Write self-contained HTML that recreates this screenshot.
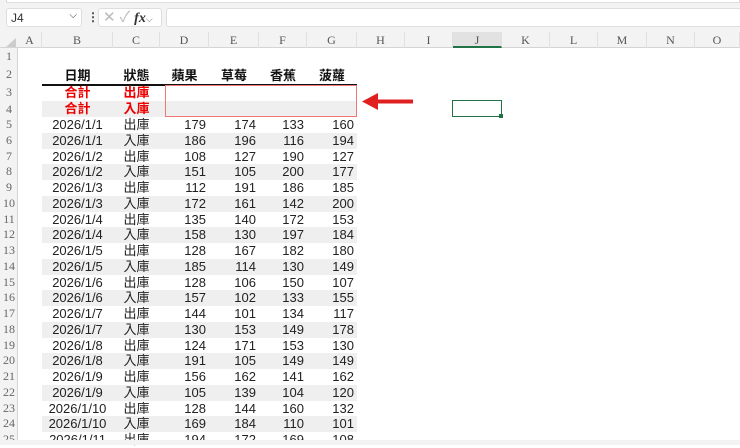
<!DOCTYPE html><html><head><meta charset="utf-8"><style>
*{margin:0;padding:0;box-sizing:border-box}
body{width:740px;height:445px;overflow:hidden;background:#fff;font-family:"Liberation Sans","Noto Sans CJK TC",sans-serif;position:relative}
.a{position:absolute}
.ch{position:absolute;top:32px;height:16px;font:12px "Liberation Serif",serif;color:#555;text-align:center;line-height:16px;border-right:1px solid #e0e0e0}
.rh{position:absolute;left:0;width:18px;font:12px "Liberation Serif",serif;color:#666;text-align:center}
.c{position:absolute;font-size:13px;color:#222;white-space:nowrap}
</style></head><body>
<div class="a" style="left:0;top:0;width:740px;height:32px;background:#f3f3f3"></div>
<div class="a" style="left:6px;top:0;width:734px;height:3px;background:#fff;border:1px solid #ddd;border-top:none"></div>
<div class="a" style="left:6px;top:8px;width:76px;height:19px;background:#fff;border:1px solid #ddd;border-radius:3px;font-size:12px;color:#333;padding:2px 4px">J4<span style="position:absolute;right:4px;top:1px;font-size:10px">⌵</span></div>
<div class="a" style="left:87px;top:10px;font-size:12px;color:#444;font-weight:bold">⋮</div>
<div class="a" style="left:98px;top:8px;width:64px;height:19px;background:#fff;border:1px solid #ddd;border-radius:3px;font-size:15px;line-height:17px;color:#bbb;padding:0 4px">✕&nbsp;✓&nbsp;<i style="color:#333;font-family:'Liberation Serif',serif;font-size:14px;font-weight:bold">fx</i><span style="font-size:9px;color:#666">⌵</span></div>
<div class="a" style="left:166px;top:8px;width:580px;height:19px;background:#fff;border:1px solid #ddd;border-radius:3px"></div>
<div class="a" style="left:0;top:32px;width:740px;height:16px;background:#f3f3f3;border-bottom:1px solid #d4d4d4"></div>
<div class="a" style="left:0;top:48px;width:18px;height:397px;background:#f3f3f3;border-right:1px solid #d4d4d4"></div>
<div class="a" style="left:6px;top:38px;width:0;height:0;border-left:10px solid transparent;border-bottom:9px solid #ccc"></div>
<div class="ch" style="left:18px;width:24px">A</div>
<div class="ch" style="left:42px;width:71px">B</div>
<div class="ch" style="left:113px;width:47px">C</div>
<div class="ch" style="left:160px;width:49px">D</div>
<div class="ch" style="left:209px;width:50px">E</div>
<div class="ch" style="left:259px;width:48px">F</div>
<div class="ch" style="left:307px;width:50px">G</div>
<div class="ch" style="left:357px;width:48px">H</div>
<div class="ch" style="left:405px;width:48px">I</div>
<div class="ch" style="left:453px;width:49px;background:#e2e2e2;border-bottom:2px solid #217346">J</div>
<div class="ch" style="left:502px;width:48px">K</div>
<div class="ch" style="left:550px;width:48px">L</div>
<div class="ch" style="left:598px;width:49px">M</div>
<div class="ch" style="left:647px;width:48px">N</div>
<div class="ch" style="left:695px;width:45px">O</div>
<div id="g"></div>
<script>
var d=[["2026/1/1","出庫",179,174,133,160],["2026/1/1","入庫",186,196,116,194],["2026/1/2","出庫",108,127,190,127],["2026/1/2","入庫",151,105,200,177],["2026/1/3","出庫",112,191,186,185],["2026/1/3","入庫",172,161,142,200],["2026/1/4","出庫",135,140,172,153],["2026/1/4","入庫",158,130,197,184],["2026/1/5","出庫",128,167,182,180],["2026/1/5","入庫",185,114,130,149],["2026/1/6","出庫",128,106,150,107],["2026/1/6","入庫",157,102,133,155],["2026/1/7","出庫",144,101,134,117],["2026/1/7","入庫",130,153,149,178],["2026/1/8","出庫",124,171,153,130],["2026/1/8","入庫",191,105,149,149],["2026/1/9","出庫",156,162,141,162],["2026/1/9","入庫",105,139,104,120],["2026/1/10","出庫",128,144,160,132],["2026/1/10","入庫",169,184,110,101],["2026/1/11","出庫",194,172,169,108]];
var h='';
var tops=[48,64,85,100.5];
for(var i=0;i<21;i++)tops.push(117+i*15.75);
var hts=[16,21,15.5,16.5];
for(var r=0;r<tops.length;r++){var t=tops[r],ht=hts[r]||15.75;
h+='<div class="rh" style="top:'+t+'px;height:'+ht+'px;line-height:'+ht+'px">'+(r+1)+'</div>';
if(r>=3&&r%2==1)h+='<div class="a" style="left:42px;top:'+t+'px;width:315px;height:'+ht+'px;background:#efefef"></div>';
}
function cell(x,w,t,ht,txt,al,st){return '<div class="c" style="left:'+x+'px;width:'+w+'px;top:'+t+'px;height:'+ht+'px;line-height:'+ht+'px;text-align:'+al+';'+(st||'')+'">'+txt+'</div>';}
var hd=["日期","狀態","蘋果","草莓","香蕉","菠蘿"],xs=[42,113,160,209,259,307],ws=[71,47,49,50,48,50];
for(var k=0;k<6;k++)h+=cell(xs[k],ws[k],66,19,hd[k],'center','font-weight:bold;color:#111');
h+='<div class="a" style="left:42px;top:84px;width:315px;height:2px;background:#111"></div>';
h+=cell(42,71,85,15.5,"合計",'center','color:#e00;font-weight:bold')+cell(113,47,85,15.5,"出庫",'center','color:#e00;font-weight:bold');
h+=cell(42,71,100.5,16.5,"合計",'center','color:#e00;font-weight:bold')+cell(113,47,100.5,16.5,"入庫",'center','color:#e00;font-weight:bold');
for(var i=0;i<21;i++){var t=117+i*15.75,x=d[i];
h+=cell(42,71,t,15.75,x[0],'center');h+=cell(113,47,t,15.75,x[1],'center');
for(var k=2;k<6;k++)h+=cell(xs[k],ws[k]-3,t,15.75,x[k],'right');}
document.getElementById('g').innerHTML=h;
</script>
<div class="a" style="left:165px;top:85px;width:192px;height:32px;border:1px solid #e77"></div>
<div class="a" style="left:452px;top:100px;width:50px;height:17px;border:1.5px solid #217346"></div>
<div class="a" style="left:499px;top:114px;width:4px;height:4px;background:#217346"></div>
<svg class="a" style="left:360px;top:92px" width="56" height="20"><rect x="14" y="7.5" width="39" height="4" fill="#e02020"/><polygon points="2,9.5 18,1 18,18" fill="#e02020"/></svg>
<div class="a" style="left:0;top:440px;width:740px;height:5px;background:#f3f3f3"></div>
</body></html>
